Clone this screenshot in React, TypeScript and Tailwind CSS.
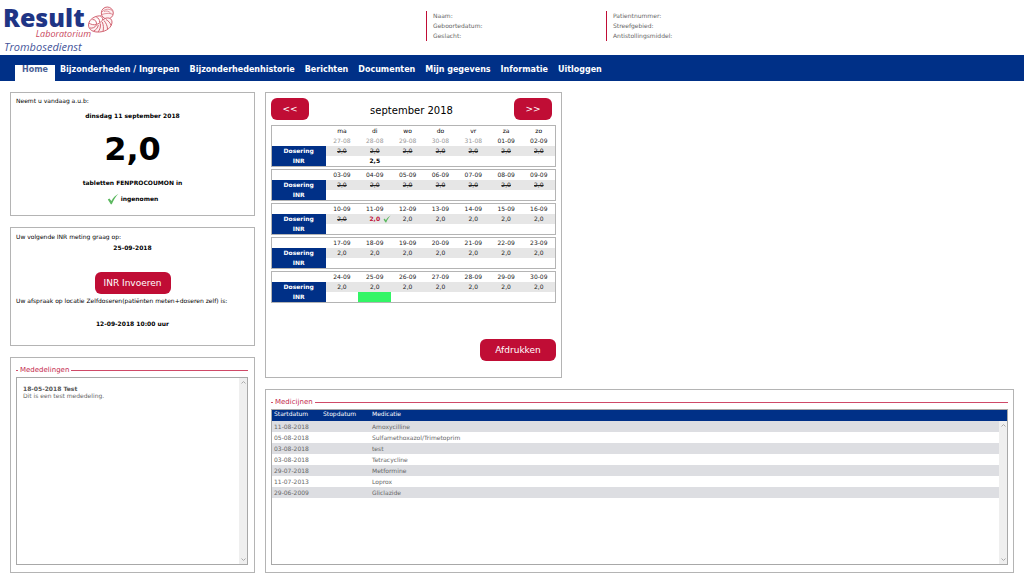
import { ReactNode } from "react";

const navItems = [
  "Home",
  "Bijzonderheden / Ingrepen",
  "Bijzonderhedenhistorie",
  "Berichten",
  "Documenten",
  "Mijn gegevens",
  "Informatie",
  "Uitloggen",
];

const dayNames = ["ma", "di", "wo", "do", "vr", "za", "zo"];

const weeks = [
  ["27-08", "28-08", "29-08", "30-08", "31-08", "01-09", "02-09"],
  ["03-09", "04-09", "05-09", "06-09", "07-09", "08-09", "09-09"],
  ["10-09", "11-09", "12-09", "13-09", "14-09", "15-09", "16-09"],
  ["17-09", "18-09", "19-09", "20-09", "21-09", "22-09", "23-09"],
  ["24-09", "25-09", "26-09", "27-09", "28-09", "29-09", "30-09"],
];

const medicines = [
  ["11-08-2018", "Amoxycilline"],
  ["05-08-2018", "Sulfamethoxazol/Trimetoprim"],
  ["03-08-2018", "test"],
  ["03-08-2018", "Tetracycline"],
  ["29-07-2018", "Metformine"],
  ["11-07-2013", "Loprox"],
  ["29-06-2009", "Gliclazide"],
];

function Check({ className }: { className: string }) {
  return (
    <svg viewBox="0 0 12 12" className={className} aria-hidden="true">
      <path d="M0.8 6.6 L2.4 5.4 L4.4 8 C6 5 8.4 2.4 11.4 0.8 C8.6 3.8 6.6 7.2 4.8 11.2 L3.8 11.2 Z" fill="#5cb860" />
    </svg>
  );
}

function Panel({ children, className = "" }: { children: ReactNode; className?: string }) {
  return <section className={`border border-[#b4b4b4] bg-white ${className}`}>{children}</section>;
}

function Button({ children, className = "" }: { children: ReactNode; className?: string }) {
  return (
    <button type="button" className={`h-[22px] rounded-md bg-[#c00d35] text-[9px] text-white ${className}`}>
      {children}
    </button>
  );
}

function Heading({ children }: { children: ReactNode }) {
  return (
    <h2 className="flex h-3 items-center gap-[2px] text-[7px] text-[#c4294c]">
      <span className="h-px w-[2px] bg-[#d0506c]" />
      {children}
      <span className="h-px flex-1 bg-[#cf4a68]" />
    </h2>
  );
}

function ScrollTrack() {
  return (
    <div className="flex w-2 shrink-0 flex-col items-center justify-between bg-[#efefef] py-[3px]" aria-hidden="true">
      <svg viewBox="0 0 5 3" className="h-[3px] w-[5px]">
        <path d="M0.5 2.5 L2.5 0.5 L4.5 2.5" fill="none" stroke="#aaa" />
      </svg>
      <svg viewBox="0 0 5 3" className="h-[3px] w-[5px]">
        <path d="M0.5 0.5 L2.5 2.5 L4.5 0.5" fill="none" stroke="#aaa" />
      </svg>
    </div>
  );
}

function Logo() {
  return (
    <div className="flex h-[55px] pt-[5px] pl-[3px] font-['Open_Sans','Noto_Sans',sans-serif]">
      <div className="w-[88px]">
        <div className="text-[25px] leading-[24px] font-extrabold text-[#1f3585]">Result</div>
        <div className="text-right text-[9px] leading-[10px] text-[#c9475c] italic">Laboratorium</div>
        <div className="pl-px text-[11px] leading-[16px] text-[#45559a] italic">Trombosedienst</div>
      </div>
      <svg viewBox="0 0 28 28" className="-ml-1 size-7" fill="none" stroke="#cd5564" strokeWidth="0.9" aria-hidden="true">
        <circle cx="20.300" cy="8" r="6" fill="#fdf1f2" />
        <path d="M15 7 C18 3.500 23 3.500 25.500 6 M14.800 9.500 C19 8 24 8 26 9.500 M17 6.500 C19 5.500 22 6 23.500 8" strokeWidth="0.6" />
        <path d="M14.500 11 C9 10 1.500 14 1.500 20 C1.500 25 6.500 27.500 12.500 27 C20 26.500 25 22 25 17 C25 13.500 21.500 12 18 13.500 C14.500 15 13.500 18.500 9.500 19.500 C6.500 20.200 4 19.500 2 18" fill="#fdf1f2" />
        <path d="M5.500 14.500 C8 14.500 9.500 16 9.500 19 M9.500 12.300 C11.500 13 12.800 14.500 12.500 17.500 M13.500 11.200 C15 12 15.800 13 15.500 14.800 M3 23 C5.500 23.500 8 22.500 9.500 20 M6.500 26 C9 25 10.800 23 11.300 20 M11 27 C13 24.500 13.800 22 13.300 18.500 M16 26.400 C16.800 23 16.500 20 15.200 17 M20.500 24 C20.500 21 19 18 17 15.500 M24 20.500 C23.500 18 21.500 16 19 14.500" />
      </svg>
    </div>
  );
}

function Week({ dates, index }: { dates: string[]; index: number }) {
  const first = index === 0;
  return (
    <table className="w-full table-fixed border border-[#b4b4b4] text-center text-[6px] leading-[10px]">
      <colgroup>
        <col className="w-[54px]" />
      </colgroup>
      <thead>
        {first && (
          <tr className="h-[10px]">
            <td />
            {dayNames.map((d) => (
              <th key={d} scope="col" className="p-0 font-normal">
                {d}
              </th>
            ))}
          </tr>
        )}
        <tr className="h-[10px]">
          <td />
          {dates.map((d, i) => (
            <th key={d} scope="col" className={`p-0 font-normal ${first && i < 5 ? "text-[#999]" : "text-[#222]"}`}>
              {d}
            </th>
          ))}
        </tr>
      </thead>
      <tbody>
        <tr className="h-[10px] bg-[#e6e6e6]">
          <th scope="row" className="bg-[#003087] p-0 font-bold text-white">
            Dosering
          </th>
          {dates.map((d, i) => {
            const past = index < 2 || (index === 2 && i === 0);
            const today = index === 2 && i === 1;
            return (
              <td key={d} className={`relative p-0 ${today ? "font-bold text-[#c00d35]" : "text-[#222]"} ${past ? "line-through" : ""}`}>
                2,0
                {today && <Check className="absolute top-px right-0 size-2" />}
              </td>
            );
          })}
        </tr>
        <tr className="h-[10px]">
          <th scope="row" className="bg-[#003087] p-0 font-bold text-white">
            INR
          </th>
          {dates.map((d, i) => (
            <td key={d} className={`p-0 font-bold ${index === 4 && i === 1 ? "bg-[#33f566]" : ""}`}>
              {first && i === 1 ? "2,5" : ""}
            </td>
          ))}
        </tr>
      </tbody>
    </table>
  );
}

export default function App() {
  return (
    <div className="flex min-h-screen flex-col bg-white font-['DejaVu_Sans',Verdana,sans-serif] text-[6px] leading-[10px] text-black">
      <header className="flex h-[55px] items-start">
        <div className="w-[426px] shrink-0">
          <Logo />
        </div>
        <div className="mt-[11px] w-[180px] border-l border-[#c00d35] pl-[6px] text-[#666]">
          <p>Naam:</p>
          <p>Geboortedatum:</p>
          <p>Geslacht:</p>
        </div>
        <div className="mt-[11px] border-l border-[#c00d35] pl-[6px] text-[#666]">
          <p>Patientnummer:</p>
          <p>Streefgebied:</p>
          <p>Antistollingsmiddel:</p>
        </div>
      </header>

      <nav className="flex h-[26px] items-end bg-[#003087] pl-[15px] text-[8px] font-bold">
        {navItems.map((item, i) => (
          <a key={item} href="#" className={`h-4 whitespace-nowrap ${i === 0 ? "bg-white px-[7px] text-[#4a5f96]" : "px-[5px] text-white"}`}>
            {item}
          </a>
        ))}
      </nav>

      <main className="flex flex-1 gap-[10px] px-[10px] pt-[11px] pb-[6px]">
        <div className="flex w-[245px] shrink-0 flex-col gap-[11px]">
          <Panel className="h-[124px] px-[5px] pt-[3px]">
            <p>Neemt u vandaag a.u.b:</p>
            <div className="text-center font-bold">
              <p className="mt-[5px]">dinsdag 11 september 2018</p>
              <p className="mt-[8px] text-[32px] leading-[40px]">2,0</p>
              <p className="mt-[9px]">tabletten FENPROCOUMON in</p>
              <p className="mt-[5px] flex items-center justify-center gap-[2px]">
                <Check className="size-3" />
                ingenomen
              </p>
            </div>
          </Panel>

          <Panel className="h-[119px] px-[5px] pt-[4px]">
            <p>Uw volgende INR meting graag op:</p>
            <p className="mt-px text-center font-bold">25-09-2018</p>
            <div className="mt-[19px] flex justify-center">
              <Button className="w-[76px]">INR Invoeren</Button>
            </div>
            <p className="mt-[2px] whitespace-nowrap">Uw afspraak op locatie Zelfdoseren(patiënten meten+doseren zelf) is:</p>
            <p className="mt-[13px] text-center font-bold">12-09-2018 10:00 uur</p>
          </Panel>

          <Panel className="flex flex-1 flex-col px-[5px] pt-[6px] pb-[7px]">
            <div className="pr-px">
              <Heading>Mededelingen</Heading>
            </div>
            <div className="mt-px mr-px flex flex-1 border border-[#a8a8a8]">
              <div className="flex-1 px-[6px] pt-[7px] leading-[7px] text-[#666]">
                <p className="font-bold text-[#555]">18-05-2018 Test</p>
                <p>Dit is een test mededeling.</p>
              </div>
              <ScrollTrack />
            </div>
          </Panel>
        </div>

        <div className="flex min-w-0 flex-1 flex-col gap-[11px]">
          <Panel className="h-[286px] w-[297px] px-[5px] pt-[5px]">
            <div className="flex items-center justify-between">
              <Button className="w-[38px]">&lt;&lt;</Button>
              <h1 className="pt-1 text-[10px]">september 2018</h1>
              <Button className="mr-1 w-[38px]">&gt;&gt;</Button>
            </div>
            <div className="mt-[5px] flex flex-col gap-[2px]">
              {weeks.map((dates, i) => (
                <Week key={dates[0]} dates={dates} index={i} />
              ))}
            </div>
            <div className="mt-[36px] flex justify-end">
              <Button className="w-[76px]">Afdrukken</Button>
            </div>
          </Panel>

          <Panel className="flex flex-1 flex-col px-[5px] pt-[6px] pb-[7px]">
            <Heading>Medicijnen</Heading>
            <div className="mt-px flex flex-1 flex-col border border-[#a8a8a8]">
              <div className="flex flex-1">
                <table className="w-full table-fixed self-start text-left text-[#666]">
                  <colgroup>
                    <col className="w-[49px]" />
                    <col className="w-[49px]" />
                    <col />
                  </colgroup>
                  <thead>
                    <tr className="h-[11px] bg-[#003087] align-top leading-[8px] text-white">
                      <th className="p-0 pl-[2px] font-normal">Startdatum</th>
                      <th className="p-0 pl-[2px] font-normal">Stopdatum</th>
                      <th className="p-0 pl-[2px] font-normal">Medicatie</th>
                    </tr>
                  </thead>
                  <tbody>
                    {medicines.map(([date, name], i) => (
                      <tr key={i} className="h-[11px] odd:bg-[#dddee2]">
                        <td className="p-0 pl-[2px]">{date}</td>
                        <td className="p-0 pl-[2px]" />
                        <td className="p-0 pl-[2px]">{name}</td>
                      </tr>
                    ))}
                  </tbody>
                </table>
                <div className="flex flex-col">
                  <div className="h-[11px] bg-[#003087]" />
                  <div className="flex flex-1">
                    <ScrollTrack />
                  </div>
                </div>
              </div>
            </div>
          </Panel>
        </div>
      </main>
    </div>
  );
}
